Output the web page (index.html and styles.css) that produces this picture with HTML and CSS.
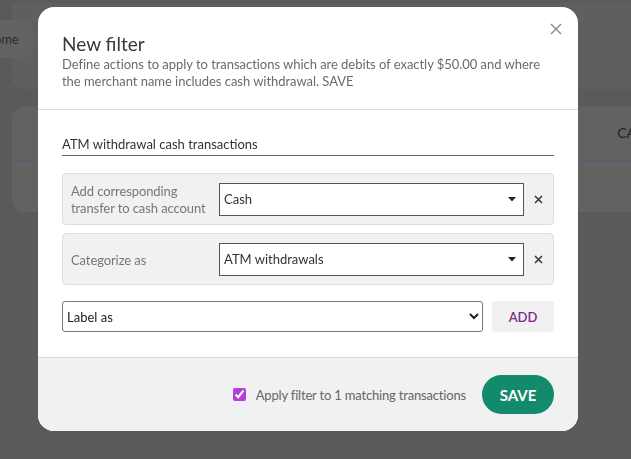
FILE: index.html
```html
<!DOCTYPE html>
<html lang="en">
<head>
  <meta charset="UTF-8">
  <title>New filter</title>
  <link rel="stylesheet" href="styles.css">
</head>
<body>

  <div class="page">
    <div class="top-card">
      <div class="tab">ome</div>
    </div>
    <div class="table-card">
      <div class="table-head">CA</div>
    </div>
  </div>

  <div class="overlay">
    <div class="modal">
      <div class="modal-header">
        <div class="modal-title">New filter</div>
        <div class="modal-desc">Define actions to apply to transactions which are debits of exactly $50.00 and where the merchant name includes cash withdrawal. SAVE</div>
        <svg class="close" width="12" height="12" viewBox="0 0 12 12"><path d="M1 1L11 11M11 1L1 11" stroke="#8a8a8a" stroke-width="1.4"/></svg>
      </div>

      <div class="modal-body">
        <div class="name-input">ATM withdrawal cash transactions</div>

        <div class="rule">
          <div class="rule-label">Add corresponding transfer to cash account</div>
          <div class="rule-select">
            <span>Cash</span>
            <svg width="8" height="5" viewBox="0 0 8 5"><path d="M0 0H8L4 4.5Z" fill="#222"/></svg>
          </div>
          <svg class="remove" width="9" height="9" viewBox="0 0 9 9"><path d="M1 1L8 8M8 1L1 8" stroke="#333" stroke-width="1.5"/></svg>
        </div>

        <div class="rule">
          <div class="rule-label">Categorize as</div>
          <div class="rule-select">
            <span>ATM withdrawals</span>
            <svg width="8" height="5" viewBox="0 0 8 5"><path d="M0 0H8L4 4.5Z" fill="#222"/></svg>
          </div>
          <svg class="remove" width="9" height="9" viewBox="0 0 9 9"><path d="M1 1L8 8M8 1L1 8" stroke="#333" stroke-width="1.5"/></svg>
        </div>

        <div class="add-row">
          <select class="action-select">
            <option>Label as</option>
          </select>
          <button class="add-button">ADD</button>
        </div>
      </div>

      <div class="modal-footer">
        <label class="apply">
          <input type="checkbox" checked>
          Apply filter to 1 matching transactions
        </label>
        <button class="save-button">SAVE</button>
      </div>
    </div>
  </div>

</body>
</html>
```

FILE: styles.css
```css
body {
  margin: 0;
  background-color: #5a5a59;
  font-family: "Lato", "Liberation Sans", sans-serif;
  overflow: hidden;
}

.page {
  padding-top: 3px;
}

.top-card {
  margin-left: 12px;
  height: 86px;
  background-color: #5f5f5f;
  border-radius: 0 0 0 12px;
  padding-top: 17px;
  box-sizing: border-box;
}

.tab {
  margin-left: -12px;
  width: 33px;
  height: 38px;
  line-height: 38px;
  background-color: #636363;
  border-radius: 0 10px 10px 0;
  color: #2c2c2c;
  font-size: 13px;
  text-indent: -6px;
  overflow: hidden;
}

.table-card {
  margin: 17px 0 0 12px;
  height: 106px;
  background-color: #626262;
  border-radius: 12px 0 0 12px;
}

.table-head {
  height: 54px;
  line-height: 54px;
  border-bottom: 1px solid #6c4f78;
  text-align: right;
  color: #222;
  font-size: 14px;
  margin-right: -5px;
}

.overlay {
  position: fixed;
  top: 0;
  left: 0;
  right: 0;
  bottom: 0;
  padding: 7px 0 0 38px;
}

.modal {
  width: 540px;
  height: 424px;
  background-color: #fff;
  border-radius: 16px;
  overflow: hidden;
  display: flex;
  flex-direction: column;
}

.modal-header {
  position: relative;
  padding: 25px 24px 19px;
  border-bottom: 1px solid #dcdcdc;
}

.modal-title {
  font-size: 19px;
  line-height: 24px;
  color: #3a3a3a;
}

.modal-desc {
  font-size: 13px;
  line-height: 17px;
  color: #6b6b6b;
  letter-spacing: -0.04px;
}

.close {
  position: absolute;
  top: 16px;
  right: 16px;
}

.modal-body {
  padding: 20px 24px 25px;
}

.name-input {
  height: 25px;
  line-height: 28px;
  font-size: 13px;
  color: #333;
  border-bottom: 1px solid #666;
  margin-bottom: 17px;
}

.rule {
  display: flex;
  align-items: center;
  height: 52px;
  box-sizing: border-box;
  padding: 8px 0 8px 8px;
  margin-bottom: 8px;
  background-color: #f1f1f1;
  border: 1px solid #dedede;
  border-radius: 4px;
}

.rule-label {
  width: 148px;
  font-size: 13px;
  line-height: 17px;
  color: #777;
  letter-spacing: -0.1px;
  padding-top: 2px;
}

.rule-select {
  flex: 1;
  height: 33px;
  box-sizing: border-box;
  display: flex;
  align-items: center;
  justify-content: space-between;
  padding: 0 7px 0 4px;
  background-color: #fff;
  border: 1px solid #555;
  font-size: 13px;
  color: #333;
}

.remove {
  margin: 0 10px;
}

.add-row {
  display: flex;
  gap: 9px;
  margin-top: 16px;
}

.action-select {
  flex: 1;
  height: 31px;
  font-family: "Lato", "Liberation Sans", sans-serif;
  font-size: 13px;
  color: #222;
  background-color: #fff;
  border: 1px solid #767676;
  border-radius: 3px;
  padding-left: 0;
}

.add-button {
  width: 62px;
  height: 31px;
  border: none;
  border-radius: 3px;
  background-color: #f1f1f1;
  color: #7b2a8c;
  font-family: "Lato", "Liberation Sans", sans-serif;
  font-size: 13px;
  font-weight: 600;
}

.modal-footer {
  flex: 1;
  display: flex;
  align-items: center;
  justify-content: flex-end;
  gap: 16px;
  padding: 0 24px;
  background-color: #f1f1f1;
  border-top: 1px solid #dadada;
}

.apply {
  display: flex;
  align-items: center;
  gap: 10px;
  font-size: 13px;
  color: #666;
  letter-spacing: -0.18px;
}

.apply input {
  width: 13px;
  height: 13px;
  margin: 0;
  accent-color: #b23fd6;
}

.save-button {
  width: 72px;
  height: 39px;
  border: none;
  border-radius: 20px;
  background-color: #138a6c;
  color: #fff;
  font-family: "Lato", "Liberation Sans", sans-serif;
  font-size: 15px;
  font-weight: 700;
}
```
